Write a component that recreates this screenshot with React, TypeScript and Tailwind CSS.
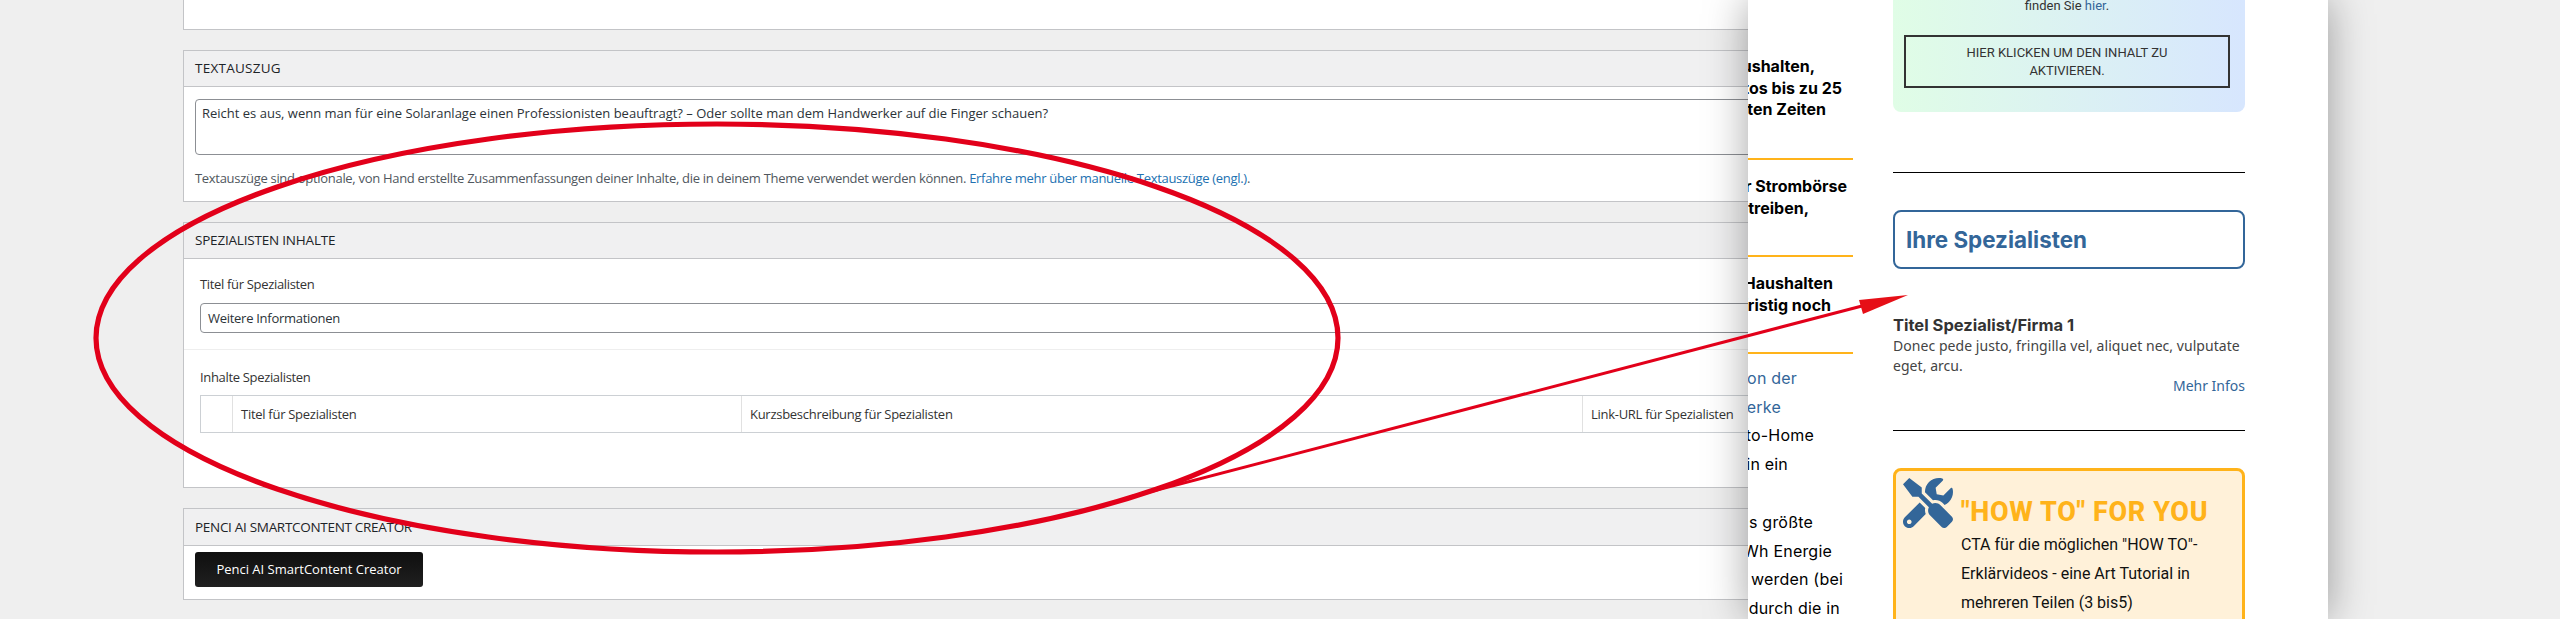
import type { ReactNode } from 'react';
import { FaTools } from 'react-icons/fa';

const adminFont = "font-['Open_Sans',sans-serif]";

function Panel({ title, titleClass, headerH = 'h-[36px]', bodyH, children }: { title: string; titleClass: string; headerH?: string; bodyH: string; children: ReactNode }) {
  return (
    <section className={`mt-[20px] border border-[#c3c4c7] ${adminFont}`}>
      <div className={`flex items-center border-b border-[#c3c4c7] bg-[#f0f0f1] pl-[11px] text-[13.5px] uppercase text-[#1d2327] ${titleClass} ${headerH}`}>
        {title}
      </div>
      <div className={`bg-white ${bodyH}`}>{children}</div>
    </section>
  );
}

function AdminColumn() {
  return (
    <div className="w-[1800px] pl-[183px]">
      <div className="h-[30px] border border-t-0 border-[#c3c4c7] bg-white" />

      <Panel title="Textauszug" titleClass="tracking-[0.25px]" bodyH="h-[114px]">
        <div className="pl-[11px] pt-[12px]">
          <div className="h-[56px] rounded-[4px] border border-[#8c8f94] px-[6px] text-[13px] leading-[26px] text-[#2c3338]">
            Reicht es aus, wenn man für eine Solaranlage einen Professionisten beauftragt? – Oder sollte man dem Handwerker auf die Finger schauen?
          </div>
          <p className="mt-[13px] text-[13px] leading-[20px] tracking-[-0.3px] text-[#50575e]">
            Textauszüge sind optionale, von Hand erstellte Zusammenfassungen deiner Inhalte, die in deinem Theme verwendet werden können.{' '}
            <a className="text-[#2271b1]">Erfahre mehr über manuelle Textauszüge (engl.)</a>.
          </p>
        </div>
      </Panel>

      <Panel title="Spezialisten Inhalte" titleClass="tracking-[-0.2px]" bodyH="h-[228px]">
        <div className="border-b border-[#eeeeee] pb-[16px] pl-[16px] pt-[15px]">
          <div className="mb-[9px] text-[13px] leading-[20px] tracking-[-0.33px] text-[#333]">Titel für Spezialisten</div>
          <div className="flex h-[30px] items-center rounded-[4px] border border-[#8c8f94] pl-[7px] pt-[2px] text-[13px] tracking-[-0.28px] text-[#2c3338]">
            Weitere Informationen
          </div>
        </div>
        <div className="pl-[16px] pt-[17px]">
          <div className="mb-[8px] text-[13px] leading-[20px] tracking-[-0.33px] text-[#333]">Inhalte Spezialisten</div>
          <div className="flex h-[38px] border border-[#ccd0d4] text-[13px] tracking-[-0.28px] text-[#333]">
            <div className="w-[32px] border-r border-[#e1e1e1]" />
            <div className="flex w-[509px] items-center border-r border-[#e1e1e1] pl-[8px] pt-[2px]">Titel für Spezialisten</div>
            <div className="flex w-[841px] items-center border-r border-[#e1e1e1] pl-[8px] pt-[2px]">Kurzsbeschreibung für Spezialisten</div>
            <div className="flex flex-1 items-center pl-[8px] pt-[2px]">Link-URL für Spezialisten</div>
          </div>
        </div>
      </Panel>

      <Panel title="Penci AI SmartContent Creator" titleClass="tracking-[-0.3px]" headerH="h-[37px]" bodyH="h-[53px]">
        <div className="pl-[11px] pt-[6px]">
          <button className="flex h-[35px] w-[228px] items-center justify-center rounded-[3px] bg-gradient-to-b from-[#0f0f0f] to-[#202020] text-[13px] text-white">
            Penci AI SmartContent Creator
          </button>
        </div>
      </Panel>
    </div>
  );
}

function ArticleLine({ pr, link, children }: { pr: string; link?: boolean; children: ReactNode }) {
  return (
    <div className={`flex justify-end overflow-hidden whitespace-nowrap ${pr} ${link ? 'text-[#336699]' : ''}`}>
      <span className="shrink-0">{children}</span>
    </div>
  );
}

function ArticleColumn() {
  return (
    <div className="w-[105px] shrink-0 font-['Inter',sans-serif] text-black">
      <div className="pt-[56px] text-[16px] font-bold leading-[21.5px]">
        <ArticleLine pr="pr-[38px]">Haushalten,</ArticleLine>
        <ArticleLine pr="pr-[11px]">Fotos bis zu 25</ArticleLine>
        <ArticleLine pr="pr-[27px]">besten Zeiten</ArticleLine>
      </div>
      <div className="mt-[37.5px] h-[2px] bg-[#ffb31a]" />
      <div className="pt-[16px] text-[16px] font-bold leading-[21.5px]">
        <ArticleLine pr="pr-[6px]">der Strombörse</ArticleLine>
        <ArticleLine pr="pr-[44px]">betreiben,</ArticleLine>
      </div>
      <div className="mt-[36px] h-[2px] bg-[#ffb31a]" />
      <div className="pt-[16px] text-[16px] font-bold leading-[21.5px]">
        <ArticleLine pr="pr-[20px]">Haushalten</ArticleLine>
        <ArticleLine pr="pr-[22px]">langfristig noch</ArticleLine>
      </div>
      <div className="mt-[36px] h-[2px] bg-[#ffb31a]" />
      <div className="pt-[10px] text-[16px] leading-[28.7px] tracking-[0.2px]">
        <ArticleLine pr="pr-[56px]" link>Version der</ArticleLine>
        <ArticleLine pr="pr-[72px]" link>Kraftwerke</ArticleLine>
        <ArticleLine pr="pr-[39px]">Vehicle-to-Home</ArticleLine>
        <ArticleLine pr="pr-[65px]">(V2H) in ein</ArticleLine>
        <div className="h-[29px]" />
        <ArticleLine pr="pr-[40px]">das größte</ArticleLine>
        <ArticleLine pr="pr-[21px]">kWh Energie</ArticleLine>
        <ArticleLine pr="pr-[10px]">gespeist werden (bei</ArticleLine>
        <ArticleLine pr="pr-[13px]">durch die in</ArticleLine>
      </div>
    </div>
  );
}

function SidebarColumn() {
  return (
    <aside className="ml-[40px] w-[352px] shrink-0">
      <div className="-mt-[20px] h-[132px] rounded-lg bg-gradient-to-r from-[#e0fde6] to-[#d7e6fe] pl-[11px] pr-[15px] pt-[16px] font-['Roboto',sans-serif] text-[13px] text-[#333]">
        <p className="text-center leading-[20px]">
          finden Sie <a className="text-[#336699]">hier</a>.
        </p>
        <div className="mt-[19px] flex h-[53px] flex-col items-center justify-center border-2 border-[#333] text-center leading-[18px]">
          <span>HIER KLICKEN UM DEN INHALT ZU</span>
          <span>AKTIVIEREN.</span>
        </div>
      </div>

      <div className="mt-[60px] h-px bg-black" />

      <div className="mt-[37px] flex h-[59px] items-center rounded-lg border-2 border-[#336699] pl-[11px] font-['Inter',sans-serif] text-[22.4px] font-bold text-[#336699]">
        Ihre Spezialisten
      </div>

      <div className="mt-[46px] font-['Inter',sans-serif] text-[16.5px] font-bold leading-[20px] text-[#333]">
        Titel Spezialist/Firma 1
      </div>
      <p className="mt-[1px] font-['Noto_Sans',sans-serif] text-[14px] leading-[20px] tracking-[0.05px] text-[#444]">
        Donec pede justo, fringilla vel, aliquet nec, vulputate eget, arcu.
      </p>
      <div className="text-right font-['Noto_Sans',sans-serif] text-[14px] leading-[20px] text-[#336699]">Mehr Infos</div>

      <div className="mt-[34px] h-px bg-black" />

      <div className="mt-[37px] h-[200px] rounded-lg border-[3px] border-[#ffb31a] bg-[#fff1d9] font-['Roboto',sans-serif]">
        <div className="flex pl-[7px] pt-[7px]">
          <FaTools className="h-[50px] w-[50px] shrink-0 text-[#336699]" />
          <div className="ml-[8px]">
            <div className="whitespace-nowrap pt-[15px] text-[27px] font-extrabold leading-[38px] tracking-[0.65px] text-[#ffb31a]">"HOW TO" FOR YOU</div>
            <p className="-mt-[1px] text-[16px] leading-[29px] text-[#111]">
              CTA für die möglichen "HOW TO"-
              <br />
              Erklärvideos - eine Art Tutorial in
              <br />
              mehreren Teilen (3 bis5)
            </p>
          </div>
        </div>
      </div>
    </aside>
  );
}

function Annotation() {
  return (
    <svg className="pointer-events-none absolute left-0 top-0" width="2560" height="619" viewBox="0 0 2560 619">
      <ellipse cx="717" cy="338" rx="621" ry="214" fill="none" stroke="#e2001a" strokeWidth="5.2" />
      <line x1="1130" y1="497" x2="1862" y2="306" stroke="#e2001a" strokeWidth="3" />
      <polygon points="1908,295 1859,300 1863,314" fill="#e60f17" />
    </svg>
  );
}

export default function App() {
  return (
    <div className="relative h-[619px] w-[2560px] overflow-hidden bg-[#efefef]">
      <AdminColumn />
      <div className="absolute left-[1748px] top-0 flex h-[619px] w-[580px] bg-white shadow-[0_0_40px_rgba(0,0,0,0.36)]">
        <ArticleColumn />
        <SidebarColumn />
      </div>
      <Annotation />
    </div>
  );
}
